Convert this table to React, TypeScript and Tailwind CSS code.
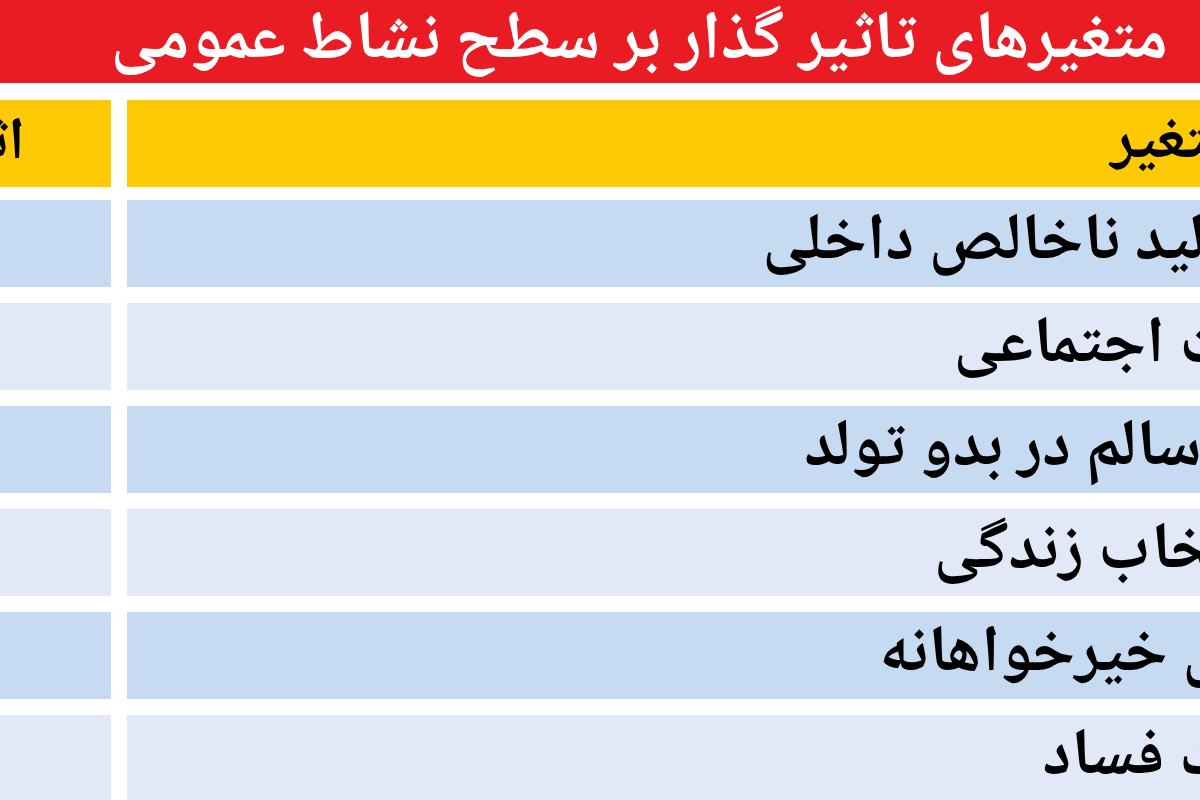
import React from "react";

const FONT = '"Noto Naskh Arabic", "Noto Sans Arabic", "DejaVu Sans", sans-serif';

const rows: { text: string; dark: boolean; shift: string }[] = [
  { text: "تولید ناخالص داخلی", dark: true, shift: "mr-[-60px]" },
  { text: "حمایت اجتماعی", dark: false, shift: "mr-[-145px]" },
  { text: "امید به زندگی سالم در بدو تولد", dark: true, shift: "mr-[-350px]" },
  { text: "آزادی انتخاب زندگی", dark: false, shift: "mr-[-222px]" },
  { text: "رفتارهای خیرخواهانه", dark: true, shift: "mr-[-198px]" },
  { text: "ادراک فساد", dark: false, shift: "mr-[-119px]" },
];

export default function App() {
  return (
    <div
      className="w-[1200px] h-[800px] overflow-hidden bg-white flex flex-col"
      style={{ fontFamily: FONT }}
    >
      <div className="h-[83px] shrink-0 bg-[#e91c24] flex justify-end items-end pr-[32px]">
        <div dir="rtl" className="text-white font-bold text-[68px] leading-none whitespace-nowrap -translate-y-[6px]">
          متغیرهای تاثیر گذار بر سطح نشاط عمومی
        </div>
      </div>

      <div className="mt-[17px] h-[87px] shrink-0 flex gap-[16px]">
        <div className="w-[111px] bg-[#ffca05] flex items-end justify-end overflow-hidden pr-[86px] pb-[11px]">
          <span dir="rtl" className="text-black font-bold text-[60px] leading-none whitespace-nowrap">اثر</span>
        </div>
        <div className="flex-1 bg-[#ffca05] flex items-end justify-end pb-[11px]">
          <span dir="rtl" className="text-black font-bold text-[62px] leading-none whitespace-nowrap mr-[-37px]">متغیر</span>
        </div>
      </div>

      <div className="mt-[13px] flex flex-col gap-[16px]">
        {rows.map((r, i) => (
          <div key={i} className="h-[87px] shrink-0 flex gap-[16px]">
            <div className={`w-[111px] ${r.dark ? "bg-[#c6dbf2]" : "bg-[#e1e8f7]"}`} />
            <div
              className={`flex-1 flex items-end justify-end ${r.dark ? "bg-[#c6dbf2]" : "bg-[#e1e8f7]"}`}
            >
              <span
                dir="rtl"
                className={`text-black font-bold text-[66px] leading-none whitespace-nowrap -translate-y-[9px] ${r.shift}`}
              >
                {r.text}
              </span>
            </div>
          </div>
        ))}
      </div>
    </div>
  );
}
